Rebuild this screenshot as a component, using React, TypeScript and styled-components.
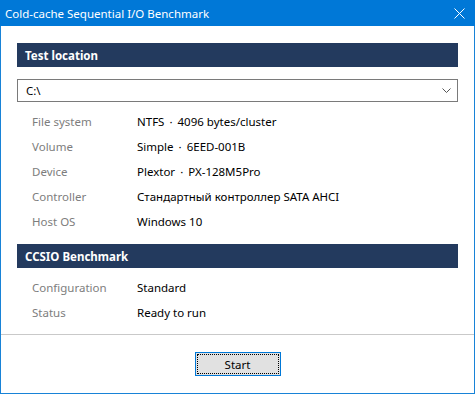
import React from "react";
import styled, { createGlobalStyle } from "styled-components";

const Global = createGlobalStyle`
  html, body { margin: 0; padding: 0; background: #ffffff; }
  body { font-family: "Noto Sans", "Open Sans", sans-serif; }
`;

const Window = styled.div`
  width: 475px;
  height: 394px;
  box-sizing: border-box;
  border: 1px solid #1883d7;
  border-top: none;
  display: flex;
  flex-direction: column;
  background: #ffffff;
  font-size: 11.5px;
  color: #000;
`;

const TitleBar = styled.div`
  height: 26px;
  flex: none;
  margin: 0 -1px;
  background: #0078d7;
  display: flex;
  align-items: center;
  justify-content: space-between;
  padding: 0 0 0 5px;
  color: #ffffff;
  font-size: 11.5px;
`;

const CloseBox = styled.div`
  width: 32px;
  height: 26px;
  display: flex;
  align-items: center;
  justify-content: center;
`;

const Body = styled.div`
  flex: 1;
  padding: 17px 16px 0 16px;
  display: flex;
  flex-direction: column;
`;

const SectionHeader = styled.div<{ $gap?: number }>`
  height: 24px;
  flex: none;
  background: #233a5e;
  color: #ffffff;
  font-weight: 700;
  display: flex;
  align-items: center;
  padding-left: 8px;
  margin-top: ${(p) => p.$gap ?? 0}px;
`;

const Combo = styled.div`
  margin-top: 12px;
  height: 23px;
  flex: none;
  box-sizing: border-box;
  border: 1px solid #7a7a7a;
  display: flex;
  align-items: center;
  justify-content: space-between;
  padding: 0 6px 0 8px;
`;

const Rows = styled.div`
  display: flex;
  flex-direction: column;
  padding-left: 15px;
  margin-top: 7px;
`;

const Row = styled.div`
  height: 25px;
  display: flex;
  align-items: center;
`;

const Label = styled.div`
  width: 105px;
  color: #7d7d7d;
`;

const Value = styled.div`
  color: #000000;
`;

const Footer = styled.div`
  flex: none;
  border-top: 1px solid #c9c9c9;
  height: 58px;
  display: flex;
  align-items: center;
  justify-content: center;
`;

const Button = styled.button`
  width: 86px;
  height: 24px;
  box-sizing: border-box;
  border: 1px solid #0078d7;
  background: #e1e1e1;
  padding: 1px;
  font-family: inherit;
  font-size: 11.5px;
  color: #000;
  display: flex;
`;

const FocusRect = styled.span`
  flex: 1;
  border: 1px dotted #000;
  display: flex;
  align-items: center;
  justify-content: center;
`;

const Dot = styled.span`
  margin: 0 5px;
`;

const rows1: [string, React.ReactNode][] = [
  ["File system", <>NTFS<Dot>·</Dot>4096 bytes/cluster</>],
  ["Volume", <>Simple<Dot>·</Dot>6EED-001B</>],
  ["Device", <>Plextor<Dot>·</Dot>PX-128M5Pro</>],
  ["Controller", "Стандартный контроллер SATA AHCI"],
  ["Host OS", "Windows 10"],
];

const rows2: [string, string][] = [
  ["Configuration", "Standard"],
  ["Status", "Ready to run"],
];

export default function App() {
  return (
    <>
      <Global />
      <Window>
        <TitleBar>
          <span>Cold-cache Sequential I/O Benchmark</span>
          <CloseBox>
            <svg width="11" height="11" viewBox="0 0 11 11">
              <path d="M0.5 0.5 L10.5 10.5 M10.5 0.5 L0.5 10.5" stroke="#fff" strokeWidth="1" />
            </svg>
          </CloseBox>
        </TitleBar>
        <Body>
          <SectionHeader>Test location</SectionHeader>
          <Combo>
            <span>C:\</span>
            <svg width="9" height="5" viewBox="0 0 9 5">
              <path d="M0.5 0.5 L4.5 4.5 L8.5 0.5" stroke="#555" strokeWidth="1" fill="none" />
            </svg>
          </Combo>
          <Rows>
            {rows1.map(([l, v]) => (
              <Row key={l}>
                <Label>{l}</Label>
                <Value>{v}</Value>
              </Row>
            ))}
          </Rows>
          <SectionHeader $gap={10}>CCSIO Benchmark</SectionHeader>
          <Rows>
            {rows2.map(([l, v]) => (
              <Row key={l}>
                <Label>{l}</Label>
                <Value>{v}</Value>
              </Row>
            ))}
          </Rows>
        </Body>
        <Footer>
          <Button>
            <FocusRect>Start</FocusRect>
          </Button>
        </Footer>
      </Window>
    </>
  );
}
